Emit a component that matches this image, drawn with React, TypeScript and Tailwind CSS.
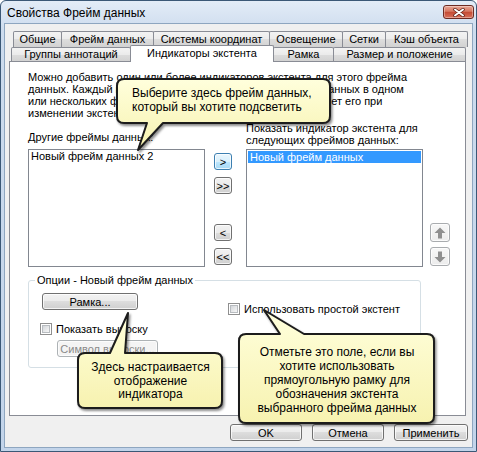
import React from "react";

type BtnProps = {
  className?: string;
  children?: React.ReactNode;
  variant?: "normal" | "hot" | "disabled";
};

function Btn({ className = "", children, variant = "normal" }: BtnProps) {
  const look =
    variant === "hot"
      ? "border-[#3c7fb1] bg-[linear-gradient(#eaf6fd,#d9f0fc_50%,#bee6fd_50%,#a7d9f5)]"
      : variant === "disabled"
      ? "border-[#adb2b5] bg-[#f4f4f4] text-[#8a8a8a]"
      : "border-[#707070] bg-[linear-gradient(#f2f2f2,#ebebeb_50%,#dddddd_50%,#cfcfcf)]";
  return (
    <div
      className={`flex items-center justify-center rounded-[3px] border leading-[12px] shadow-[inset_0_0_0_1px_rgba(255,255,255,0.75)] ${look} ${className}`}
    >
      {children}
    </div>
  );
}

function Check() {
  return (
    <div className="w-[12px] h-[12px] border border-[#8f8f8f] bg-white p-[1px] shrink-0">
      <div className="w-full h-full border border-[#b8bcc0] bg-[linear-gradient(135deg,#d3d6da,#f7f7f7)]" />
    </div>
  );
}

function Arrow({ down = false }: { down?: boolean }) {
  return (
    <svg width="12" height="12" viewBox="0 0 12 12" className={down ? "rotate-180" : ""}>
      <path d="M6 0.5 L11.5 6 H8 V11.5 H4 V6 H0.5 Z" fill="#8f8f8f" />
    </svg>
  );
}

const tabBase =
  "flex items-center justify-center border border-b-0 border-[#898c95] rounded-t-[2px] whitespace-nowrap -ml-px first:ml-0";
const tabOff = "bg-[linear-gradient(#f3f3f3,#ebebeb_50%,#dddddd_50%,#d2d2d2)]";

const row1: [string, string][] = [
  ["Общие", "w-[49px]"],
  ["Фрейм данных", "w-[93px]"],
  ["Системы координат", "w-[117px]"],
  ["Освещение", "w-[74px]"],
  ["Сетки", "w-[44px]"],
  ["Кэш объекта", "w-[83px]"],
];

export default function App() {
  return (
    <div className="relative w-[477px] h-[452px] overflow-hidden font-['Liberation_Sans',Arial,sans-serif] text-[11px] text-black">
      <div className="w-full h-full flex flex-col border border-[#3b5876] rounded-t-[6px] bg-[linear-gradient(#e3ecf7,#cddcee_30px,#c2d4ea)]">
        {/* title bar */}
        <div className="h-[22px] shrink-0 flex items-start justify-between pl-[6px] pr-[2px]">
          <span className="pt-[5px] leading-[14px] text-[12px]">Свойства Фрейм данных</span>
          <div className="mt-[4px] w-[31px] h-[14px] rounded-[3px] border border-[#6d2b22] bg-[linear-gradient(#eaa896,#d67660_45%,#c44a33_50%,#d9705a)] flex items-center justify-center shadow-[inset_0_0_0_1px_rgba(255,255,255,0.35)]">
            <svg width="12" height="9" viewBox="0 0 12 9">
              <path d="M2 1.5 L10 7.5 M10 1.5 L2 7.5" stroke="#5a1c12" strokeWidth="3.4" strokeLinecap="round" />
              <path d="M2 1.5 L10 7.5 M10 1.5 L2 7.5" stroke="#ffffff" strokeWidth="2" strokeLinecap="round" />
            </svg>
          </div>
        </div>

        {/* body */}
        <div className="mx-[3px] mb-[3px] flex-1 min-h-0 bg-[#f0f0f0] border border-[#8ea6c0] flex flex-col">
          {/* tab row 1 */}
          <div className="mt-[7px] ml-[8px] h-[14px] flex items-start">
            {row1.map(([t, w]) => (
              <div key={t} className={`${tabBase} ${tabOff} ${w} h-[16px]`}>
                {t}
              </div>
            ))}
          </div>
          {/* tab row 2 */}
          <div className="relative z-10 ml-[6px] h-[16px] flex items-end">
            <div className={`${tabBase} ${tabOff} w-[120px] h-[14px]`}>Группы аннотаций</div>
            <div className={`${tabBase} w-[144px] h-[17px] -mb-px bg-white pb-[2px]`}>Индикаторы экстента</div>
            <div className={`${tabBase} ${tabOff} w-[61px] h-[14px]`}>Рамка</div>
            <div className={`${tabBase} ${tabOff} w-[133px] h-[14px]`}>Размер и положение</div>
          </div>

          {/* panel */}
          <div className="ml-[4px] w-[457px] h-[355px] shrink-0 bg-white border border-[#898c95] pl-[18px] pt-[9px] flex flex-col">
            <div className="leading-[12px] whitespace-nowrap">
              <div>Можно добавить один или более индикаторов экстента для этого фрейма</div>
              <div>данных. Каждый индикатор экстента показывает экстент данных в одном</div>
              <div>или нескольких фреймах данных и автоматически обновляет его при</div>
              <div>изменении экстента.</div>
            </div>

            <div className="mt-[3px] flex items-end">
              <div className="w-[177px] flex flex-col">
                <div className="leading-[12px]">Другие фреймы данных:</div>
                <div className="mt-[6px] h-[118px] border border-[#828790] bg-white pl-[2px] leading-[13px]">
                  Новый фрейм данных 2
                </div>
              </div>
              <div className="ml-[9px] w-[18px] mb-[2px] flex flex-col">
                <Btn variant="hot" className="h-[17px]">&gt;</Btn>
                <Btn className="h-[17px] mt-[7px]">&gt;&gt;</Btn>
                <Btn className="h-[17px] mt-[30px]">&lt;</Btn>
                <Btn className="h-[17px] mt-[7px]">&lt;&lt;</Btn>
              </div>
              <div className="ml-[14px] w-[177px] flex flex-col">
                <div className="leading-[12px]">
                  Показать индикатор экстента для
                  <br />
                  следующих фреймов данных:
                </div>
                <div className="mt-[3px] h-[118px] border border-[#828790] bg-white p-px">
                  <div className="h-[12px] leading-[12px] bg-[#3399ff] text-white pl-[2px]">Новый фрейм данных</div>
                </div>
              </div>
              <div className="ml-[7px] w-[20px] mb-[1px] flex flex-col">
                <Btn className="h-[19px] border-[#a9acaf] bg-[linear-gradient(#f7f7f7,#ececec)]">
                  <Arrow />
                </Btn>
                <Btn className="h-[19px] mt-[5px] border-[#a9acaf] bg-[linear-gradient(#f7f7f7,#ececec)]">
                  <Arrow down />
                </Btn>
              </div>
            </div>

            <fieldset className="mt-[7px] w-[393px] border border-[#d5dfe5] rounded-[3px]">
              <legend className="ml-[6px] px-[2px] leading-[12px]">Опции - Новый фрейм данных</legend>
              <div className="flex pl-[13px] pt-[7px] pb-[10px]">
                <div className="w-[116px] flex flex-col">
                  <Btn className="w-[96px] h-[17px]">Рамка...</Btn>
                  <div className="mt-[12px] -ml-[2px] h-[14px] flex items-center gap-[4px] leading-[14px]">
                    <Check />
                    <span>Показать выноску</span>
                  </div>
                  <Btn variant="disabled" className="mt-[4px] ml-[15px] w-[101px] h-[17px]">
                    Символ выноски...
                  </Btn>
                </div>
                <div className="ml-[70px] mt-[9px] h-[14px] flex items-center gap-[4px] leading-[14px]">
                  <Check />
                  <span>Использовать простой экстент</span>
                </div>
              </div>
            </fieldset>
          </div>

          {/* dialog buttons */}
          <div className="mt-[8px] pr-[4px] flex justify-end gap-[10px]">
            <Btn className="w-[72px] h-[17px]">OK</Btn>
            <Btn className="w-[72px] h-[17px]">Отмена</Btn>
            <Btn className="w-[74px] h-[17px]">Применить</Btn>
          </div>
        </div>
      </div>

      {/* callouts */}
      <svg className="absolute left-0 top-0 pointer-events-none" width="477" height="452">
        <defs>
          <linearGradient id="cg" x1="0" y1="0" x2="0" y2="1">
            <stop offset="0" stopColor="#ffffdc" />
            <stop offset="1" stopColor="#f7f2b0" />
          </linearGradient>
          <filter id="sh" x="-10%" y="-10%" width="130%" height="140%">
            <feDropShadow dx="1.5" dy="2" stdDeviation="1.2" floodColor="#000" floodOpacity="0.45" />
          </filter>
        </defs>
        <path
          d="M124 79 H323 Q330 79 330 86 V116 Q330 123 323 123 H163 L138 150 L147 123 H124 Q117 123 117 116 V86 Q117 79 124 79 Z"
          fill="url(#cg)"
          stroke="#1c1c1c"
          strokeWidth="2"
          strokeLinejoin="round"
          filter="url(#sh)"
        />
        <path
          d="M85 353 H110 L128 313 L125 353 H215 Q222 353 222 360 V401 Q222 408 215 408 H85 Q78 408 78 401 V360 Q78 353 85 353 Z"
          fill="url(#cg)"
          stroke="#1c1c1c"
          strokeWidth="2"
          strokeLinejoin="round"
          filter="url(#sh)"
        />
        <path
          d="M246 334 H280 L264 310 L304 334 H427 Q434 334 434 341 V416 Q434 423 427 423 H246 Q239 423 239 416 V341 Q239 334 246 334 Z"
          fill="url(#cg)"
          stroke="#1c1c1c"
          strokeWidth="2"
          strokeLinejoin="round"
          filter="url(#sh)"
        />
      </svg>
      <div className="absolute left-[132px] top-[86px] text-[12px] leading-[14px] whitespace-nowrap">
        Выберите здесь фрейм данных,
        <br />
        который вы хотите подсветить
      </div>
      <div className="absolute left-[78px] top-[361px] w-[145px] text-center text-[12px] leading-[13.5px]">
        Здесь настраивается
        <br />
        отображение
        <br />
        индикатора
      </div>
      <div className="absolute left-[239px] top-[345px] w-[196px] text-center text-[12px] leading-[14px]">
        Отметьте это поле, если вы
        <br />
        хотите использовать
        <br />
        прямоугольную рамку для
        <br />
        обозначения экстента
        <br />
        выбранного фрейма данных
      </div>
    </div>
  );
}
